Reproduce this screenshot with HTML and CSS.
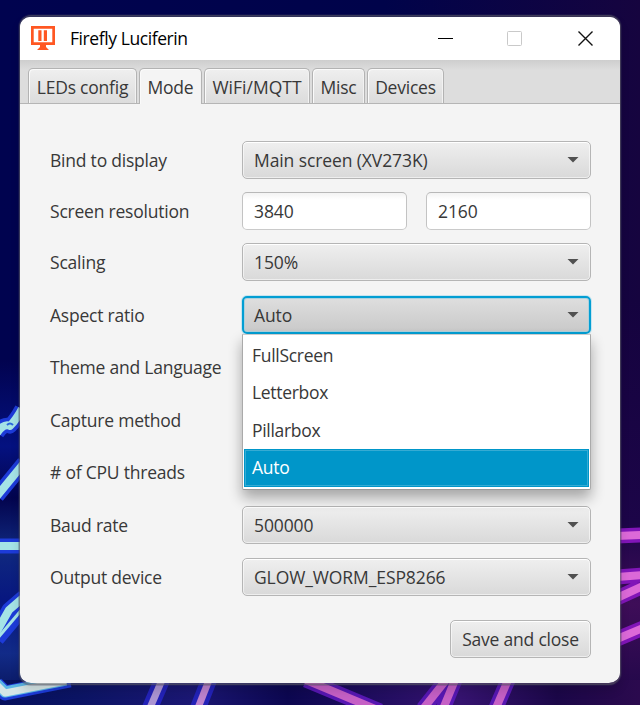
FILE: index.html
```html
<!DOCTYPE html>
<html lang="en">
<head>
<meta charset="utf-8">
<title>Firefly Luciferin</title>
<link rel="stylesheet" href="styles.css">
</head>
<body>
<svg class="wallpaper" width="640" height="705" viewBox="0 0 640 705" aria-hidden="true">
  <defs>
    <linearGradient id="sky" x1="0" x2="1" y1="0" y2="0">
      <stop offset="0" stop-color="#00034f"/><stop offset=".6" stop-color="#00034a"/><stop offset="1" stop-color="#16043f"/>
    </linearGradient>
    <linearGradient id="side" x1="0" x2="0" y1="0" y2="1">
      <stop offset="0" stop-color="#02034f"/><stop offset=".25" stop-color="#041180"/><stop offset=".4" stop-color="#03044e"/><stop offset=".55" stop-color="#10297f"/><stop offset=".7" stop-color="#071680"/><stop offset=".85" stop-color="#122b88"/><stop offset="1" stop-color="#061052"/>
    </linearGradient>
    <linearGradient id="floor" x1="0" x2="1" y1="0" y2="0">
      <stop offset="0" stop-color="#07105c"/><stop offset=".12" stop-color="#0b1464"/><stop offset=".3" stop-color="#1b1773"/><stop offset=".45" stop-color="#0c0750"/><stop offset=".72" stop-color="#35136f"/><stop offset=".87" stop-color="#1b0748"/><stop offset="1" stop-color="#2b0a4e"/>
    </linearGradient>
    <linearGradient id="glow" x1="0" x2="0" y1="0" y2="1">
      <stop offset="0" stop-color="#15033f"/><stop offset=".55" stop-color="#1c0548"/><stop offset=".75" stop-color="#3e0d58"/><stop offset="1" stop-color="#1e0748"/>
    </linearGradient>
  </defs>
  <rect width="640" height="705" fill="url(#sky)"/>
  <rect y="360" width="30" height="345" fill="url(#side)"/>
  <rect x="610" y="300" width="30" height="405" fill="url(#glow)"/>
  <rect y="680" width="640" height="25" fill="url(#floor)"/>
  <g fill="none" stroke-linejoin="round">
    <g stroke="#1d3bd8" stroke-width="15">
      <path d="M-3 433Q4 423 10 426Q16 420 22 409M-3 496L24 463M-3 546H24M-4 633L9 610L24 597M-3 639L24 607M-4 684L5 693L70 680"/>
    </g>
    <g stroke="#a5e3e6" stroke-width="8">
      <path d="M-3 433Q4 423 10 426Q16 420 22 409M-3 496L24 463M-3 546H24M-4 633L9 610L24 597"/>
    </g>
    <path d="M-3 639L24 607" stroke="#a5e3e6" stroke-width="3"/>
    <path d="M-4 683L5 692L66 680" stroke="#5cb6e6" stroke-width="11"/>
    <path d="M-4 684L5 693L66 681" stroke="#d5e5e6" stroke-width="7"/>
    <path d="M7 425Q10 422 13 425" stroke="#2b67dc" stroke-width="2"/>
    <path d="M162 680L150 708M209 680L198 708" stroke="#2322b7" stroke-width="16"/>
    <path d="M162 680L150 708" stroke="#ab94d2" stroke-width="7"/>
    <path d="M209 680L198 708" stroke="#bc82cd" stroke-width="7"/>
    <path d="M306 680L380 711M446 680L423 709M455 680L443 709M508 680L496 708" stroke="#5717b2" stroke-width="15"/>
    <path d="M306 680L380 711M446 680L423 709M455 680L443 709M508 680L496 708" stroke="#c560c5" stroke-width="8"/>
    <path d="M617 536L643 535M617 577L643 575M617 598L643 586M617 639L643 628" stroke="#8115b8" stroke-width="15"/>
    <path d="M617 536L643 535M617 577L643 575M617 598L643 586M617 639L643 628" stroke="#dc69d8" stroke-width="8"/>
  </g>
</svg>

<main class="window">
  <header class="titlebar">
    <svg class="app-icon" width="24" height="24" viewBox="0 0 24 24" fill="#ff5722"><path fill-rule="evenodd" d="M0 0H24V19H15V21L18 24H6L9 21V19H0ZM2.700 2.700V16.300H21.300V2.700Z"/><path d="M7.300 4.300h3.200V15h-3.200zM12.800 4.300h3.200V15h-3.200z"/></svg>
    <span class="title">Firefly Luciferin</span>
    <svg class="controls" width="158" height="20" viewBox="0 0 158 20" fill="none">
      <path d="M1 10.500H16" stroke="#000"/>
      <rect x="70.500" y="3.500" width="14" height="14" rx="1" stroke="#c9c9c9"/>
      <path d="M141.500 3.500L155.500 17.500M155.500 3.500L141.500 17.500" stroke="#111" stroke-width="1.400"/>
    </svg>
  </header>
  <nav class="tabs">
    <div class="tab tab-leds"><span>LEDs config</span></div>
    <div class="tab tab-mode active"><span>Mode</span></div>
    <div class="tab tab-wifi"><span>WiFi/MQTT</span></div>
    <div class="tab tab-misc"><span>Misc</span></div>
    <div class="tab tab-devices"><span>Devices</span></div>
  </nav>
  <section class="form">
    <label>Bind to display</label><div class="combo">Main screen (XV273K)<i></i></div>
    <label>Screen resolution</label><div class="pair"><div class="field">3840</div><div class="field">2160</div></div>
    <label>Scaling</label><div class="combo">150%<i></i></div>
    <label>Aspect ratio</label>
    <div class="combo open">Auto<i></i>
      <div class="menu">
        <div class="option">FullScreen</div>
        <div class="option">Letterbox</div>
        <div class="option">Pillarbox</div>
        <div class="option selected">Auto</div>
      </div>
    </div>
    <label class="wide">Theme and Language</label>
    <label class="wide">Capture method</label>
    <label class="wide"># of CPU threads</label>
    <label>Baud rate</label><div class="combo">500000<i></i></div>
    <label>Output device</label><div class="combo">GLOW_WORM_ESP8266<i></i></div>
  </section>
  <footer class="actions"><div class="button">Save and close</div></footer>
</main>
</body>
</html>
```

FILE: styles.css
```css
* { box-sizing: border-box; }
body {
  margin: 0;
  width: 640px;
  height: 705px;
  overflow: hidden;
  padding: 15px 18px 0 19px;
  background: #00034c;
  color: #383838;
  font: 17.5px/24px "Open Sans", "Noto Sans", sans-serif;
  letter-spacing: -0.22px;
}
.wallpaper { position: absolute; inset: 0; z-index: -1; }
.window {
  width: 602px;
  height: 670px;
  border: solid rgba(100, 100, 105, .5);
  border-width: 2px 1px;
  border-radius: 12px;
  background: #f4f4f4;
  background-clip: padding-box;
  box-shadow: 0 0 0 1px rgba(60, 60, 90, .25), 0 6px 10px rgba(0, 0, 0, .12);
}
.titlebar {
  display: flex;
  align-items: center;
  height: 43px;
  padding: 0 25px 0 11px;
  background: #fff;
  border-radius: 10px 10px 0 0;
  color: #000;
}
.app-icon { margin-top: -2px; }
.title { margin: -1px 0 0 15px; letter-spacing: -0.42px; }
.controls { margin-left: auto; margin-top: -1px; }
.tabs {
  display: flex;
  gap: 2px;
  height: 44px;
  padding: 8px 8px 0;
  border-bottom: 1px solid #b5b5b5;
  background: linear-gradient(#cecece, #ddd 10px);
}
.tab {
  height: 35px;
  padding-top: 6px;
  text-align: center;
  white-space: nowrap;
  border: 1px solid #b3b3b3;
  border-bottom: 0;
  border-radius: 5px 5px 0 0;
  background: linear-gradient(#efefef, #dcdcdc);
  box-shadow: inset 1px 1px #fafafa, inset -1px 0 #f2f2f2;
}
.tab-leds { width: 109px; }
.tab-mode { width: 63px; }
.tab-wifi { width: 106px; letter-spacing: 0; }
.tab-misc { width: 53px; }
.tab-devices { width: 77px; }
.tab.active { height: 36px; background: #f4f4f4; }
.form {
  display: grid;
  grid-template-columns: 192px 349px;
  grid-template-rows: 51px 51px 53px 52px 53px 52px 53px 52px 38px;
  padding: 37px 29px 0 30px;
}
label { height: 38px; line-height: 39px; white-space: nowrap; }
.wide { grid-column: 1 / 3; }
.combo, .button, .field {
  height: 38px;
  line-height: 37px;
  border: 1px solid #b5b5b5;
  border-radius: 5px;
}
.combo, .field { letter-spacing: -0.1px; }
.combo {
  display: flex;
  justify-content: space-between;
  align-items: center;
  position: relative;
  padding: 1px 11px 0;
}
.combo, .button {
  background: linear-gradient(#efefef, #d9d9d9);
  box-shadow: inset 0 0 0 1px rgba(255, 255, 255, .55), inset 0 1px #fff;
}
.combo i {
  width: 12px;
  height: 6px;
  margin-top: -2px;
  background: #505050;
  clip-path: polygon(0 0, 100% 0, 50% 100%);
}
.pair { display: grid; grid-template-columns: 165px 165px; gap: 19px; }
.field {
  padding-left: 11px;
  background: linear-gradient(#f3f3f3, #fff 7px);
  border-color: #b8b8b8 #c3c3c3 #cacaca;
}
.combo.open {
  border: 2px solid #039ed3;
  padding: 1px 10px 0;
  background: linear-gradient(#dedede, #c9c9c9);
  box-shadow: 0 0 0 1px #c7e5f0, inset 0 0 0 1px #acd1dd;
}
.menu {
  position: absolute;
  z-index: 2;
  top: 36px;
  left: -2px;
  width: 349px;
  height: 156px;
  padding: 1.500px 1px 2px;
  background: #fff;
  border: 1px solid #aaa;
  border-top-color: #ccc;
  border-bottom-color: #999;
  border-radius: 0 0 2px 2px;
  box-shadow: 0 8px 14px rgba(0, 0, 0, .32);
  letter-spacing: -0.3px;
}
.option { height: 37.500px; line-height: 37px; padding-left: 8px; }
.selected { color: #fff; background: #0096c9; box-shadow: inset 0 0 0 1px #0096c9, inset 0 0 0 2px #36abd3; }
.actions { display: flex; justify-content: flex-end; padding: 24px 29px 0; }
.button { width: 141px; text-align: center; white-space: nowrap; }
```
